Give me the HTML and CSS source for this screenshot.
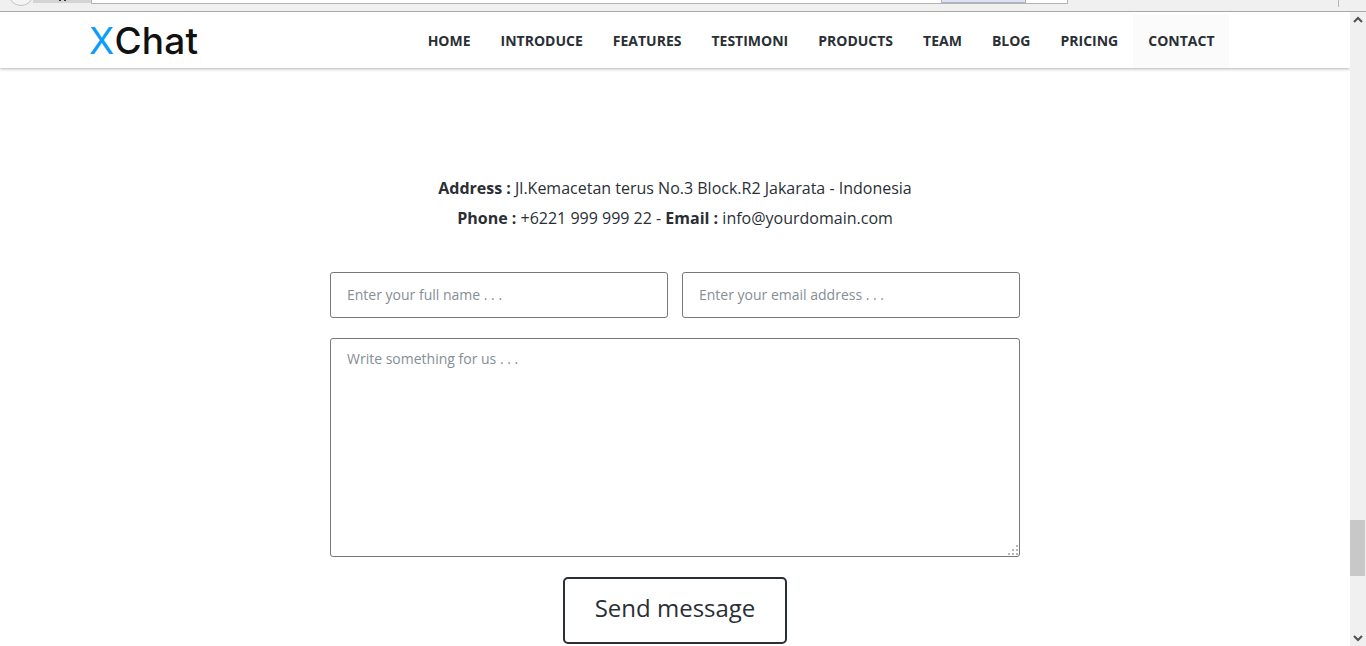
FILE: index.html
```html
<!DOCTYPE html>
<html lang="en">
<head>
  <meta charset="UTF-8" />
  <title>XChat</title>
  <link rel="stylesheet" href="styles.css">
</head>
<body>
  <div class="browser-bar">
    <div class="back-circle"></div>
    <div class="tab-stub"><i class="tab-mark"></i><i class="tab-mark"></i></div>
    <div class="url-box"><div class="url-mark"></div></div>
    <div class="bar-divider"></div>
  </div>

  <div class="window">
    <div class="page">
      <header class="topbar">
        <a class="logo" href="#"><span class="logo-x">X</span>Chat</a>
        <nav class="menu">
          <a href="#">HOME</a>
          <a href="#">INTRODUCE</a>
          <a href="#">FEATURES</a>
          <a href="#">TESTIMONI</a>
          <a href="#">PRODUCTS</a>
          <a href="#">TEAM</a>
          <a href="#">BLOG</a>
          <a href="#">PRICING</a>
          <a class="active" href="#">CONTACT</a>
        </nav>
      </header>

      <section class="contact">
        <p class="info"><strong>Address :</strong> Jl.Kemacetan terus No.3 Block.R2 Jakarata - Indonesia</p>
        <p class="info"><strong>Phone :</strong> +6221 999 999 22 - <strong>Email :</strong> info@yourdomain.com</p>

        <form class="contact-form" onsubmit="event.preventDefault()">
          <div class="form-row">
            <input type="text" placeholder="Enter your full name . . .">
            <input type="email" placeholder="Enter your email address . . .">
          </div>
          <div class="message-box">
            <textarea placeholder="Write something for us . . ."></textarea>
            <svg class="grip" width="12" height="12" viewBox="0 0 12 12" fill="#b8b8b8">
              <rect x="9" y="1" width="2" height="2"/>
              <rect x="5" y="5" width="2" height="2"/>
              <rect x="9" y="5" width="2" height="2"/>
              <rect x="1" y="9" width="2" height="2"/>
              <rect x="5" y="9" width="2" height="2"/>
              <rect x="9" y="9" width="2" height="2"/>
            </svg>
          </div>
          <button type="submit">Send message</button>
        </form>
      </section>
    </div>

    <div class="scrollbar">
      <svg class="arrow" width="16" height="10" viewBox="0 0 16 10"><path d="M4 7l4-4 4 4" fill="none" stroke="#505050" stroke-width="2"/></svg>
      <div class="track"><div class="thumb"></div></div>
      <svg class="arrow" width="16" height="10" viewBox="0 0 16 10"><path d="M4 3l4 4 4-4" fill="none" stroke="#505050" stroke-width="2"/></svg>
    </div>
  </div>
</body>
</html>
```

FILE: styles.css
```css
html, body {
  height: 100%;
}

body {
  margin: 0;
  background-color: #fff;
  color: #2a2f35;
  font-family: 'Open Sans', sans-serif;
  overflow: hidden;
  display: flex;
  flex-direction: column;
}

/* browser chrome strip */
.browser-bar {
  height: 11px;
  flex: none;
  background-color: #f0f0f0;
  border-bottom: 1px solid #a8a8a8;
  display: flex;
  overflow: hidden;
}

.back-circle {
  width: 24px;
  height: 24px;
  margin: -20px -1px 0 8px;
  border: 1px solid #c4c4c4;
  border-radius: 50%;
  background-color: #f4f4f4;
  flex: none;
  position: relative;
}

.tab-stub {
  width: 58px;
  height: 3px;
  background-color: #d4d4d4;
  flex: none;
  display: flex;
  justify-content: center;
  gap: 3px;
}

.tab-mark {
  width: 2px;
  height: 1px;
  background-color: #333;
}

.url-box {
  width: 977px;
  height: 4px;
  background-color: #fff;
  border: 1px solid #b4b4b4;
  border-top: none;
  flex: none;
  display: flex;
  justify-content: flex-end;
  padding-right: 41px;
  box-sizing: border-box;
}

.url-mark {
  width: 83px;
  height: 2px;
  background-color: #d9e3f2;
  border-left: 1px solid #b0b0c0;
  border-right: 1px solid #b0b0c0;
  border-bottom: 1px solid #b0b0c0;
  box-sizing: content-box;
}

.bar-divider {
  width: 1px;
  height: 7px;
  margin-left: 270px;
  background-color: #b8b8b8;
  flex: none;
}

.window {
  flex: 1;
  display: flex;
  min-height: 0;
}

.page {
  flex: 1;
  min-width: 0;
  overflow: hidden;
}

.topbar {
  height: 56px;
  display: flex;
  justify-content: space-between;
  align-items: center;
  padding: 0 121px 0 89px;
  box-shadow: 0 1px 3px rgba(0, 0, 0, 0.3);
}

.logo {
  font-family: 'Inter', sans-serif;
  font-size: 37px;
  font-weight: 550;
  color: #111;
  letter-spacing: 0.2px;
  text-decoration: none;
}

.logo-x {
  color: #0a9dfa;
  font-weight: 400;
}

.menu {
  display: flex;
  height: 100%;
  padding-top: 3px;
  box-sizing: border-box;
}

.menu a {
  display: flex;
  align-items: center;
  padding: 0 14.5px 2px 15.5px;
  color: #2a2f35;
  font-size: 14px;
  font-weight: 700;
  text-decoration: none;
}

.menu a.active {
  background-color: #fbfbfb;
}

.contact {
  width: 690px;
  margin: 0 auto;
  padding-top: 105px;
  text-align: center;
}

.info {
  margin: 0;
  font-size: 16px;
  line-height: 30px;
}

.contact-form {
  margin-top: 39px;
  display: flex;
  flex-direction: column;
  align-items: center;
}

.form-row {
  width: 100%;
  display: flex;
  gap: 14px;
  margin-bottom: 20px;
}

.contact-form input,
.contact-form textarea {
  box-sizing: border-box;
  border: 1px solid #777;
  border-radius: 3px;
  padding: 0 16px;
  font-family: 'Open Sans', sans-serif;
  font-size: 14px;
  color: #2a2f35;
  outline: none;
}

.contact-form input {
  flex: 1;
  min-width: 0;
  height: 46px;
  padding-bottom: 2px;
}

.message-box {
  width: 100%;
  position: relative;
  margin-bottom: 20px;
}

.contact-form textarea {
  width: 100%;
  height: 219px;
  padding-top: 10px;
  display: block;
  resize: none;
}

.grip {
  position: absolute;
  right: 1px;
  bottom: 1px;
}

.contact-form ::placeholder {
  color: #868e96;
  opacity: 1;
}

.contact-form button {
  width: 224px;
  height: 67px;
  flex: none;
  padding: 0 0 7px;
  background-color: #fff;
  border: 2px solid #2a2f35;
  border-radius: 5px;
  color: #2a2f35;
  font-family: 'Open Sans', sans-serif;
  font-size: 24px;
  cursor: pointer;
}

.scrollbar {
  width: 16px;
  flex: none;
  background-color: #f0f0f0;
  display: flex;
  flex-direction: column;
}

.arrow {
  flex: none;
  margin: 3px 0;
}

.track {
  flex: 1;
  position: relative;
}

.thumb {
  position: absolute;
  left: 0;
  right: 1px;
  bottom: 54px;
  height: 56px;
  background-color: #c8c8c8;
}
```
